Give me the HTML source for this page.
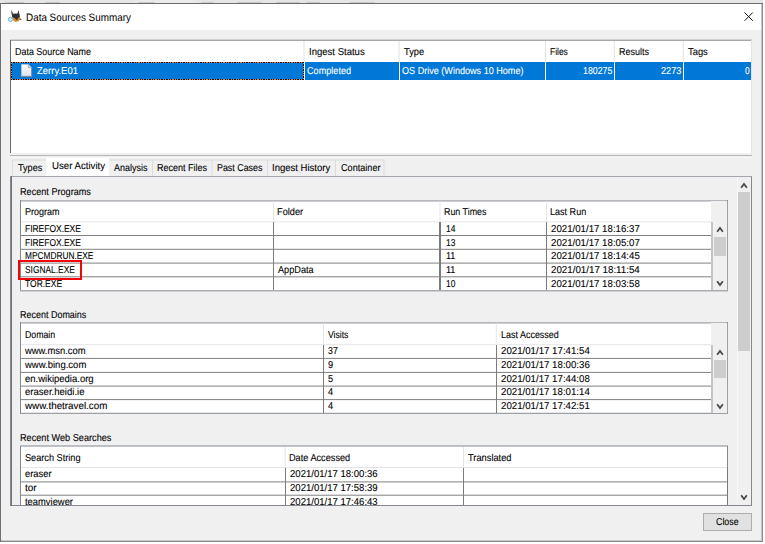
<!DOCTYPE html>
<html lang="en"><head><meta charset="utf-8"><title>Data Sources Summary</title>
<style>
html,body{margin:0;padding:0;background:#fff;}
body{width:765px;height:544px;position:relative;overflow:hidden;font-family:"Liberation Sans", sans-serif;font-size:10px;}
#w div,#w span,#w svg{position:absolute;}
#w span{white-space:nowrap;line-height:14px;transform-origin:0 0;text-rendering:geometricPrecision;-webkit-text-stroke:0.1px;}
#clip{left:0;top:0;width:765px;height:505px;overflow:hidden;}
</style></head><body><div id="w">
<div style="left:0px;top:0px;width:763px;height:3px;background:#e5e5e5;"></div>
<div style="left:135px;top:0px;width:62px;height:3px;background:#eaeaea;"></div>
<div style="left:5px;top:2px;width:19px;height:1px;background:#c9c9c9;"></div>
<div style="left:45px;top:2px;width:15px;height:1px;background:#c9c9c9;"></div>
<div style="left:138px;top:2px;width:17px;height:1px;background:#c9c9c9;"></div>
<div style="left:201px;top:2px;width:13px;height:1px;background:#c9c9c9;"></div>
<div style="left:237px;top:2px;width:25px;height:1px;background:#c9c9c9;"></div>
<div style="left:276px;top:2px;width:24px;height:1px;background:#c9c9c9;"></div>
<div style="left:306px;top:2px;width:14px;height:1px;background:#c9c9c9;"></div>
<div style="left:350px;top:2px;width:25px;height:1px;background:#c9c9c9;"></div>
<div style="left:0px;top:2.8px;width:763px;height:539.2px;background:#6c6c6c;"></div>
<div style="left:761px;top:3.8px;width:1px;height:538px;background:#c4c4c4;"></div>
<div style="left:762px;top:3.8px;width:1px;height:538.2px;background:#8c8c8c;"></div>
<div style="left:1px;top:540px;width:761px;height:1px;background:#c8c8c8;"></div>
<div style="left:1px;top:541px;width:762px;height:1px;background:#8a8a8a;"></div>
<div style="left:0px;top:3px;width:1px;height:539px;background:#707070;"></div>
<div style="left:1px;top:3.8px;width:0.3px;height:537px;background:#b0b0b0;"></div>
<div style="left:1.2px;top:3.8px;width:759.8px;height:26.2px;background:#ffffff;"></div>
<div style="left:1.2px;top:30px;width:759.8px;height:510px;background:#f0f0f0;"></div>
<svg style="left:7px;top:9px" width="17" height="15" viewBox="7 9 17 15"><path d="M11.2 9.9 L13.7 14.3 L11.8 15.6 Z" fill="#3a3438"/><path d="M11.7 11.6 L12.9 14.3 L12 14.9 Z" fill="#b4625c"/><path d="M18.6 9.9 L19.5 15 L17.1 14.4 Z" fill="#3a3438"/><path d="M12 14.6 Q15.6 12.3 19.6 14.6 L19.9 17.6 L16 19.2 L12.2 17.6 Z" fill="#2c3138"/><path d="M12.4 17 L16 18.9 L19.9 17.1 L20.4 19 L18.2 21.3 L15.6 21.9 L13.4 20.6 Z" fill="#d8861c"/><path d="M15.3 18.4 L18.2 17.9 L17 20.2 Z" fill="#2a2a2a"/><path d="M19.9 18.6 L21.9 19.3 L19.9 20 Z" fill="#2a2a2a"/><circle cx="10.4" cy="19.4" r="2.05" fill="#c6eefa" stroke="#58acd2" stroke-width="0.9"/></svg>
<svg style="left:743px;top:11px" width="12" height="12" viewBox="0 0 12 12"><path d="M1.5 1.5 L9.8 9.8 M9.8 1.5 L1.5 9.8" stroke="#1a1a1a" stroke-width="1" fill="none"/></svg>
<div style="left:10px;top:40px;width:742px;height:113px;background:#ffffff;"></div>
<div style="left:10px;top:39px;width:742px;height:1px;background:#d2d2d2;"></div>
<div style="left:10px;top:40px;width:742px;height:1px;background:#a8a8a8;"></div>
<div style="left:10px;top:40px;width:1px;height:113px;background:#696969;"></div>
<div style="left:751px;top:40px;width:1px;height:113px;background:#e3e3e3;"></div>
<div style="left:303px;top:41px;width:1px;height:21px;background:#e2e2e2;opacity:0.50"></div>
<div style="left:304px;top:41px;width:1px;height:21px;background:#e2e2e2;opacity:0.50"></div>
<div style="left:398px;top:41px;width:1px;height:21px;background:#e2e2e2;opacity:0.40"></div>
<div style="left:399px;top:41px;width:1px;height:21px;background:#e2e2e2;opacity:0.60"></div>
<div style="left:545px;top:41px;width:1px;height:21px;background:#e2e2e2;"></div>
<div style="left:613px;top:41px;width:1px;height:21px;background:#e2e2e2;opacity:0.20"></div>
<div style="left:614px;top:41px;width:1px;height:21px;background:#e2e2e2;opacity:0.80"></div>
<div style="left:682px;top:41px;width:1px;height:21px;background:#e2e2e2;opacity:0.20"></div>
<div style="left:683px;top:41px;width:1px;height:21px;background:#e2e2e2;opacity:0.80"></div>
<div style="left:11px;top:62px;width:740px;height:18px;background:#0078d7;"></div>
<div style="left:303.7px;top:62px;width:1.3px;height:18px;background:#ffffff;"></div>
<div style="left:398.7px;top:62px;width:1.3px;height:18px;background:#ffffff;"></div>
<div style="left:545.1px;top:62px;width:1.3px;height:18px;background:#ffffff;"></div>
<div style="left:613.8px;top:62px;width:1.3px;height:18px;background:#ffffff;"></div>
<div style="left:682.8px;top:62px;width:1.3px;height:18px;background:#ffffff;"></div>
<div style="left:11px;top:62px;width:293px;height:1px;background:repeating-linear-gradient(90deg,#061430 0,#061430 0.9px,#dd8030 0.9px,#dd8030 1.7px);"></div>
<div style="left:11px;top:79px;width:293px;height:1px;background:repeating-linear-gradient(90deg,#061430 0,#061430 0.9px,#dd8030 0.9px,#dd8030 1.7px);"></div>
<div style="left:11px;top:62px;width:1px;height:18px;background:repeating-linear-gradient(180deg,#061430 0,#061430 0.9px,#dd8030 0.9px,#dd8030 1.7px);"></div>
<div style="left:303px;top:62px;width:1px;height:18px;background:repeating-linear-gradient(180deg,#061430 0,#061430 0.9px,#dd8030 0.9px,#dd8030 1.7px);"></div>
<svg style="left:21px;top:64px" width="12" height="13" viewBox="0 0 12 13"><defs><linearGradient id="fg" x1="0" y1="0" x2="0" y2="1"><stop offset="0" stop-color="#ffffff"/><stop offset="1" stop-color="#dbe3ec"/></linearGradient></defs><path d="M0.5 0.5 H7.3 L10.5 3.7 V12.3 H0.5 Z" fill="url(#fg)" stroke="#b9c4d0" stroke-width="0.9"/><path d="M7.3 0.5 V3.7 H10.5" fill="#cfd8e2" stroke="#9aa6b4" stroke-width="0.8"/><path d="M0.6 12.4 H10.6 V4" fill="none" stroke="#7f8792" stroke-width="1"/></svg>
<div style="left:10px;top:154.7px;width:742px;height:1.8px;background:#b6b6b6;"></div>
<div style="left:10px;top:156.5px;width:742px;height:1.3px;background:#f6f6f6;"></div>
<div style="left:12px;top:159px;width:34px;height:1px;background:#dcdcdc;opacity:0.50"></div>
<div style="left:12px;top:160px;width:34px;height:1px;background:#dcdcdc;opacity:0.50"></div>
<div style="left:109px;top:159px;width:275px;height:1px;background:#dcdcdc;opacity:0.50"></div>
<div style="left:109px;top:160px;width:275px;height:1px;background:#dcdcdc;opacity:0.50"></div>
<div style="left:12px;top:160px;width:1px;height:16px;background:#dcdcdc;"></div>
<div style="left:152px;top:160px;width:1px;height:16px;background:#dcdcdc;"></div>
<div style="left:211px;top:160px;width:1px;height:16px;background:#dcdcdc;opacity:0.40"></div>
<div style="left:212px;top:160px;width:1px;height:16px;background:#dcdcdc;opacity:0.60"></div>
<div style="left:267px;top:160px;width:1px;height:16px;background:#dcdcdc;"></div>
<div style="left:335px;top:160px;width:1px;height:16px;background:#dcdcdc;"></div>
<div style="left:383px;top:160px;width:1px;height:16px;background:#dcdcdc;opacity:0.50"></div>
<div style="left:384px;top:160px;width:1px;height:16px;background:#dcdcdc;opacity:0.50"></div>
<div style="left:46px;top:158px;width:63.3px;height:18px;background:#ffffff;"></div>
<div style="left:10px;top:176px;width:742px;height:330px;background:transparent;box-sizing:border-box;border:1px solid #828790;border-top-color:#a3a8ae;"></div>
<div style="left:10.5px;top:176px;width:1.5px;height:330px;background:#6f747c;"></div>
<div style="left:736.5px;top:177px;width:1.5px;height:328px;background:#f7f7f7;"></div>
<div style="left:738px;top:192px;width:12px;height:159px;background:#cdcdcd;"></div>
<svg style="left:740px;top:181.9px" width="8" height="8" viewBox="0 0 8 8"><path d="M1.15 5.7 L4 2 L6.85 5.7" stroke="#484848" stroke-width="1.8" fill="none"/></svg>
<svg style="left:740px;top:494.4px" width="8" height="8" viewBox="0 0 8 8"><path d="M1.15 1.3 L4 5 L6.85 1.3" stroke="#484848" stroke-width="1.8" fill="none"/></svg>
<div style="left:20px;top:200.4px;width:707.8px;height:90.9px;background:#ffffff;"></div>
<div style="left:20px;top:200px;width:707.8px;height:1px;background:#828790;opacity:0.60"></div>
<div style="left:20px;top:201px;width:707.8px;height:1px;background:#828790;opacity:0.40"></div>
<div style="left:20px;top:200.4px;width:1px;height:89.9px;background:#828790;"></div>
<div style="left:726px;top:200.4px;width:1px;height:89.9px;background:#828790;opacity:0.20"></div>
<div style="left:727px;top:200.4px;width:1px;height:89.9px;background:#828790;opacity:0.80"></div>
<div style="left:20px;top:290px;width:707.8px;height:1px;background:#828790;opacity:0.70"></div>
<div style="left:20px;top:291px;width:707.8px;height:1px;background:#828790;opacity:0.30"></div>
<div style="left:21px;top:221px;width:691px;height:1px;background:#e5e5e5;opacity:0.70"></div>
<div style="left:21px;top:222px;width:691px;height:1px;background:#e5e5e5;opacity:0.30"></div>
<div style="left:273px;top:201.4px;width:1px;height:19.900000000000006px;background:#e5e5e5;"></div>
<div style="left:439px;top:201.4px;width:1px;height:19.900000000000006px;background:#e5e5e5;opacity:0.50"></div>
<div style="left:440px;top:201.4px;width:1px;height:19.900000000000006px;background:#e5e5e5;opacity:0.50"></div>
<div style="left:546px;top:201.4px;width:1px;height:19.900000000000006px;background:#e5e5e5;"></div>
<div style="left:21px;top:235px;width:692px;height:1px;background:#808080;"></div>
<div style="left:21px;top:248px;width:692px;height:1px;background:#808080;opacity:0.20"></div>
<div style="left:21px;top:249px;width:692px;height:1px;background:#808080;opacity:0.80"></div>
<div style="left:21px;top:262px;width:692px;height:1px;background:#808080;opacity:0.40"></div>
<div style="left:21px;top:263px;width:692px;height:1px;background:#808080;opacity:0.60"></div>
<div style="left:21px;top:276px;width:692px;height:1px;background:#808080;opacity:0.70"></div>
<div style="left:21px;top:277px;width:692px;height:1px;background:#808080;opacity:0.30"></div>
<div style="left:272.9px;top:222.3px;width:1.2px;height:68.0px;background:#7c7c7c;"></div>
<div style="left:439.4px;top:222.3px;width:1.2px;height:68.0px;background:#7c7c7c;"></div>
<div style="left:545.9px;top:222.3px;width:1.2px;height:68.0px;background:#7c7c7c;"></div>
<div style="left:711.3px;top:222.3px;width:1.6px;height:68.0px;background:#c4c4c4;"></div>
<div style="left:713px;top:201.4px;width:13.799999999999955px;height:88.9px;background:#f0f0f0;"></div>
<div style="left:711px;top:201.4px;width:2px;height:20.900000000000006px;background:#f0f0f0;"></div>
<div style="left:714px;top:237px;width:12px;height:18.599999999999994px;background:#cdcdcd;"></div>
<svg style="left:716px;top:226.2px" width="8" height="8" viewBox="0 0 8 8"><path d="M1.15 5.7 L4 2 L6.85 5.7" stroke="#484848" stroke-width="1.8" fill="none"/></svg>
<svg style="left:716px;top:279.9px" width="8" height="8" viewBox="0 0 8 8"><path d="M1.15 1.3 L4 5 L6.85 1.3" stroke="#484848" stroke-width="1.8" fill="none"/></svg>
<div style="left:20px;top:322.4px;width:707.8px;height:91.40000000000003px;background:#ffffff;"></div>
<div style="left:20px;top:322px;width:707.8px;height:1px;background:#828790;opacity:0.60"></div>
<div style="left:20px;top:323px;width:707.8px;height:1px;background:#828790;opacity:0.40"></div>
<div style="left:20px;top:322.4px;width:1px;height:90.40000000000003px;background:#828790;"></div>
<div style="left:726px;top:322.4px;width:1px;height:90.40000000000003px;background:#828790;opacity:0.20"></div>
<div style="left:727px;top:322.4px;width:1px;height:90.40000000000003px;background:#828790;opacity:0.80"></div>
<div style="left:20px;top:412px;width:707.8px;height:1px;background:#828790;opacity:0.20"></div>
<div style="left:20px;top:413px;width:707.8px;height:1px;background:#828790;opacity:0.80"></div>
<div style="left:21px;top:344px;width:691px;height:1px;background:#e5e5e5;opacity:0.80"></div>
<div style="left:21px;top:345px;width:691px;height:1px;background:#e5e5e5;opacity:0.20"></div>
<div style="left:323px;top:323.4px;width:1px;height:20.80000000000001px;background:#e5e5e5;"></div>
<div style="left:495px;top:323.4px;width:1px;height:20.80000000000001px;background:#e5e5e5;opacity:0.20"></div>
<div style="left:496px;top:323.4px;width:1px;height:20.80000000000001px;background:#e5e5e5;opacity:0.80"></div>
<div style="left:21px;top:357px;width:692px;height:1px;background:#808080;opacity:0.10"></div>
<div style="left:21px;top:358px;width:692px;height:1px;background:#808080;opacity:0.90"></div>
<div style="left:21px;top:371px;width:692px;height:1px;background:#808080;opacity:0.10"></div>
<div style="left:21px;top:372px;width:692px;height:1px;background:#808080;opacity:0.90"></div>
<div style="left:21px;top:385px;width:692px;height:1px;background:#808080;opacity:0.40"></div>
<div style="left:21px;top:386px;width:692px;height:1px;background:#808080;opacity:0.60"></div>
<div style="left:21px;top:399px;width:692px;height:1px;background:#808080;opacity:0.90"></div>
<div style="left:21px;top:400px;width:692px;height:1px;background:#808080;opacity:0.10"></div>
<div style="left:322.9px;top:345.2px;width:1.2px;height:67.60000000000002px;background:#7c7c7c;"></div>
<div style="left:495.7px;top:345.2px;width:1.2px;height:67.60000000000002px;background:#7c7c7c;"></div>
<div style="left:711.3px;top:345.2px;width:1.6px;height:67.60000000000002px;background:#c4c4c4;"></div>
<div style="left:713px;top:323.4px;width:13.799999999999955px;height:89.40000000000003px;background:#f0f0f0;"></div>
<div style="left:711px;top:323.4px;width:2px;height:21.80000000000001px;background:#f0f0f0;"></div>
<div style="left:714px;top:360px;width:12px;height:18px;background:#cdcdcd;"></div>
<svg style="left:716px;top:349.3px" width="8" height="8" viewBox="0 0 8 8"><path d="M1.15 5.7 L4 2 L6.85 5.7" stroke="#484848" stroke-width="1.8" fill="none"/></svg>
<svg style="left:716px;top:402.9px" width="8" height="8" viewBox="0 0 8 8"><path d="M1.15 1.3 L4 5 L6.85 1.3" stroke="#484848" stroke-width="1.8" fill="none"/></svg>
<div style="left:20px;top:445.5px;width:708px;height:59.5px;background:#ffffff;"></div>
<div style="left:20px;top:445px;width:708px;height:1px;background:#828790;opacity:0.50"></div>
<div style="left:20px;top:446px;width:708px;height:1px;background:#828790;opacity:0.50"></div>
<div style="left:20px;top:445.5px;width:1px;height:59.5px;background:#828790;"></div>
<div style="left:727px;top:445.5px;width:1px;height:59.5px;background:#828790;"></div>
<div style="left:21px;top:467px;width:706px;height:1px;background:#e5e5e5;"></div>
<div style="left:284px;top:446.5px;width:1px;height:20.5px;background:#e5e5e5;opacity:0.40"></div>
<div style="left:285px;top:446.5px;width:1px;height:20.5px;background:#e5e5e5;opacity:0.60"></div>
<div style="left:463px;top:446.5px;width:1px;height:20.5px;background:#e5e5e5;"></div>
<div style="left:21px;top:481px;width:707px;height:1px;background:#808080;opacity:0.60"></div>
<div style="left:21px;top:482px;width:707px;height:1px;background:#808080;opacity:0.40"></div>
<div style="left:21px;top:494px;width:707px;height:1px;background:#808080;opacity:0.30"></div>
<div style="left:21px;top:495px;width:707px;height:1px;background:#808080;opacity:0.70"></div>
<div style="left:284.5px;top:468px;width:1.2px;height:37px;background:#7c7c7c;"></div>
<div style="left:462.9px;top:468px;width:1.2px;height:37px;background:#7c7c7c;"></div>
<div style="left:726.5px;top:468px;width:1.5px;height:37px;background:#7a7a7a;"></div>
<div style="left:703px;top:513px;width:49px;height:18px;background:#e1e1e1;box-sizing:border-box;border:1px solid #adadad;"></div>
<span style="left:26.40px;top:11.00px;color:#000;font-size:10.75px;-webkit-text-stroke:0;transform:scaleX(0.9193);">Data Sources Summary</span>
<span style="left:15.00px;top:46.00px;color:#000;transform:scaleX(0.8936);">Data Source Name</span>
<span style="left:308.80px;top:46.00px;color:#000;transform:scaleX(0.9542);">Ingest Status</span>
<span style="left:403.70px;top:46.00px;color:#000;transform:scaleX(0.9268);">Type</span>
<span style="left:549.50px;top:46.00px;color:#000;transform:scaleX(0.8426);">Files</span>
<span style="left:618.80px;top:46.00px;color:#000;transform:scaleX(0.8963);">Results</span>
<span style="left:688.00px;top:46.00px;color:#000;transform:scaleX(0.9373);">Tags</span>
<span style="left:36.80px;top:65.00px;color:#fff;transform:scaleX(0.9497);">Zerry.E01</span>
<span style="left:306.60px;top:65.00px;color:#fff;transform:scaleX(0.9119);">Completed</span>
<span style="left:401.70px;top:65.00px;color:#fff;transform:scaleX(0.9072);">OS Drive (Windows 10 Home)</span>
<span style="left:582.90px;top:65.00px;color:#fff;transform:scaleX(0.8809);">180275</span>
<span style="left:661.40px;top:65.00px;color:#fff;transform:scaleX(0.9124);">2273</span>
<span style="left:745.40px;top:65.00px;color:#fff;transform:scaleX(0.8270);">0</span>
<span style="left:17.50px;top:162.00px;color:#000;transform:scaleX(0.9105);">Types</span>
<span style="left:51.50px;top:160.00px;color:#000;transform:scaleX(0.9652);">User Activity</span>
<span style="left:114.20px;top:162.00px;color:#000;transform:scaleX(0.8993);">Analysis</span>
<span style="left:156.90px;top:162.00px;color:#000;transform:scaleX(0.9014);">Recent Files</span>
<span style="left:217.00px;top:162.00px;color:#000;transform:scaleX(0.8877);">Past Cases</span>
<span style="left:272.40px;top:162.00px;color:#000;transform:scaleX(0.9519);">Ingest History</span>
<span style="left:340.80px;top:162.00px;color:#000;transform:scaleX(0.9110);">Container</span>
<span style="left:19.70px;top:186.00px;color:#000;transform:scaleX(0.9112);">Recent Programs</span>
<span style="left:24.90px;top:206.00px;color:#000;transform:scaleX(0.8994);">Program</span>
<span style="left:277.00px;top:206.00px;color:#000;transform:scaleX(0.9239);">Folder</span>
<span style="left:443.80px;top:206.00px;color:#000;transform:scaleX(0.8871);">Run Times</span>
<span style="left:550.00px;top:206.00px;color:#000;transform:scaleX(0.9043);">Last Run</span>
<span style="left:24.90px;top:223.00px;color:#000;transform:scaleX(0.8454);">FIREFOX.EXE</span>
<span style="left:445.60px;top:223.00px;color:#000;transform:scaleX(0.8449);">14</span>
<span style="left:551.20px;top:223.00px;color:#000;transform:scaleX(0.9677);">2021/01/17 18:16:37</span>
<span style="left:24.90px;top:237.00px;color:#000;transform:scaleX(0.8454);">FIREFOX.EXE</span>
<span style="left:445.60px;top:237.00px;color:#000;transform:scaleX(0.8449);">13</span>
<span style="left:551.20px;top:237.00px;color:#000;transform:scaleX(0.9677);">2021/01/17 18:05:07</span>
<span style="left:24.90px;top:250.00px;color:#000;transform:scaleX(0.8318);">MPCMDRUN.EXE</span>
<span style="left:445.60px;top:250.00px;color:#000;transform:scaleX(0.9047);">11</span>
<span style="left:551.20px;top:250.00px;color:#000;transform:scaleX(0.9677);">2021/01/17 18:14:45</span>
<span style="left:24.90px;top:264.00px;color:#000;transform:scaleX(0.8391);">SIGNAL.EXE</span>
<span style="left:277.60px;top:264.00px;color:#000;transform:scaleX(0.9147);">AppData</span>
<span style="left:445.60px;top:264.00px;color:#000;transform:scaleX(0.9047);">11</span>
<span style="left:551.20px;top:264.00px;color:#000;transform:scaleX(0.9757);">2021/01/17 18:11:54</span>
<span style="left:24.90px;top:278.00px;color:#000;transform:scaleX(0.8486);">TOR.EXE</span>
<span style="left:445.60px;top:278.00px;color:#000;transform:scaleX(0.8449);">10</span>
<span style="left:551.20px;top:278.00px;color:#000;transform:scaleX(0.9677);">2021/01/17 18:03:58</span>
<span style="left:19.80px;top:309.00px;color:#000;transform:scaleX(0.8969);">Recent Domains</span>
<span style="left:24.80px;top:329.00px;color:#000;transform:scaleX(0.8762);">Domain</span>
<span style="left:327.90px;top:329.00px;color:#000;transform:scaleX(0.8601);">Visits</span>
<span style="left:500.50px;top:329.00px;color:#000;transform:scaleX(0.8963);">Last Accessed</span>
<span style="left:24.80px;top:345.00px;color:#000;transform:scaleX(0.9387);">www.msn.com</span>
<span style="left:328.20px;top:345.00px;color:#000;transform:scaleX(0.8809);">37</span>
<span style="left:501.20px;top:345.00px;color:#000;transform:scaleX(0.9677);">2021/01/17 17:41:54</span>
<span style="left:24.80px;top:359.00px;color:#000;transform:scaleX(0.9508);">www.bing.com</span>
<span style="left:328.20px;top:359.00px;color:#000;transform:scaleX(0.9169);">9</span>
<span style="left:501.20px;top:359.00px;color:#000;transform:scaleX(0.9677);">2021/01/17 18:00:36</span>
<span style="left:24.80px;top:373.00px;color:#000;transform:scaleX(0.9493);">en.wikipedia.org</span>
<span style="left:328.20px;top:373.00px;color:#000;transform:scaleX(0.9169);">5</span>
<span style="left:501.20px;top:373.00px;color:#000;transform:scaleX(0.9677);">2021/01/17 17:44:08</span>
<span style="left:24.80px;top:386.00px;color:#000;transform:scaleX(0.9556);">eraser.heidi.ie</span>
<span style="left:328.20px;top:386.00px;color:#000;transform:scaleX(0.9169);">4</span>
<span style="left:501.20px;top:386.00px;color:#000;transform:scaleX(0.9677);">2021/01/17 18:01:14</span>
<span style="left:24.80px;top:400.00px;color:#000;transform:scaleX(0.9819);">www.thetravel.com</span>
<span style="left:328.20px;top:400.00px;color:#000;transform:scaleX(0.9169);">4</span>
<span style="left:501.20px;top:400.00px;color:#000;transform:scaleX(0.9677);">2021/01/17 17:42:51</span>
<span style="left:19.80px;top:432.00px;color:#000;transform:scaleX(0.9151);">Recent Web Searches</span>
<span style="left:24.80px;top:452.00px;color:#000;transform:scaleX(0.9159);">Search String</span>
<span style="left:289.40px;top:452.00px;color:#000;transform:scaleX(0.9173);">Date Accessed</span>
<span style="left:467.80px;top:452.00px;color:#000;transform:scaleX(0.9280);">Translated</span>
<span style="left:715.60px;top:516.00px;color:#000;transform:scaleX(0.8836);">Close</span>
<div id="clip">
<span style="left:24.80px;top:468.00px;color:#000;transform:scaleX(0.9415);">eraser</span>
<span style="left:290.40px;top:468.00px;color:#000;transform:scaleX(0.9557);">2021/01/17 18:00:36</span>
<span style="left:24.80px;top:482.00px;color:#000;transform:scaleX(0.9938);">tor</span>
<span style="left:290.40px;top:482.00px;color:#000;transform:scaleX(0.9557);">2021/01/17 17:58:39</span>
<span style="left:24.80px;top:496.00px;color:#000;transform:scaleX(0.9386);">teamviewer</span>
<span style="left:290.40px;top:496.00px;color:#000;transform:scaleX(0.9557);">2021/01/17 17:46:43</span>
</div>
<div style="left:18.1px;top:260.1px;width:63.8px;height:19.7px;box-sizing:border-box;border:2.1px solid #f2060c;"></div>
</div></body></html>
